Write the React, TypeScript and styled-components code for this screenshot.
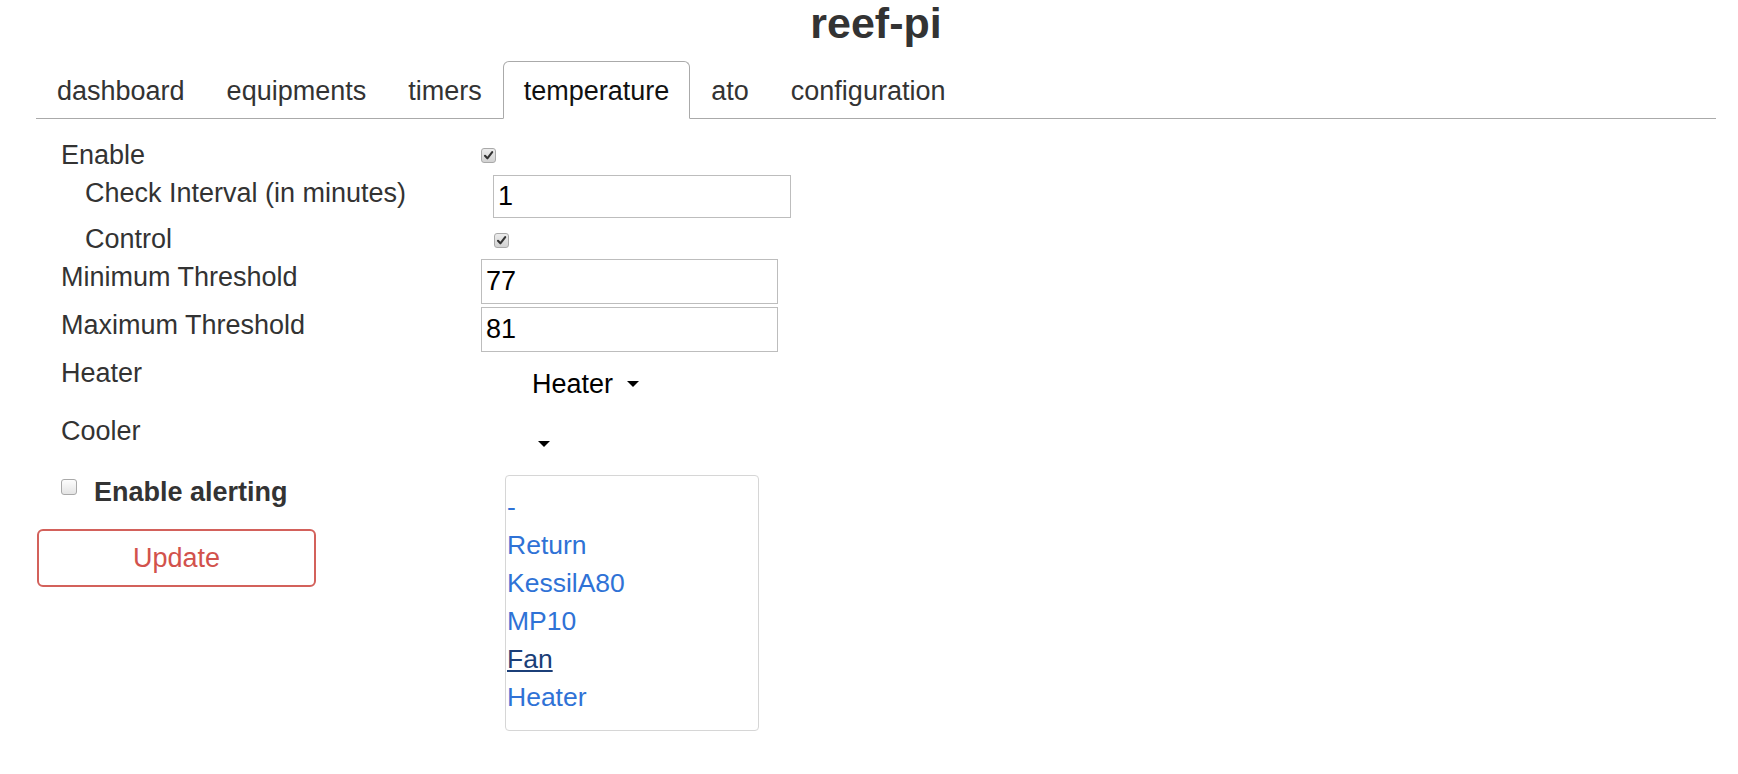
import { FC } from "react";
import styled, { createGlobalStyle } from "styled-components";

const GlobalStyle = createGlobalStyle`
  body {
    margin: 0;
    background: #fff;
    font-family: "Liberation Sans", Arial, sans-serif;
    font-size: 27px;
    color: #333;
  }
`

const Page = styled.div`
  min-height: 774px;
  padding: 0 22px 0 36px;
`

const Title = styled.h1`
  margin: 0;
  text-align: center;
  font-size: 43px;
  line-height: 47px;
  font-weight: 700;
  color: #333;
`

const Tabs = styled.ul`
  display: flex;
  list-style: none;
  margin: 14px 0 0;
  padding: 0;
  border-bottom: 1px solid #aaa;
`

const Tab = styled.li<{ $active?: boolean }>`
  padding: 10px 20px 8px;
  line-height: 38px;
  margin-bottom: -1px;
  border: 1px solid ${p => (p.$active ? '#aaa' : 'transparent')};
  border-bottom-color: ${p => (p.$active ? '#fff' : 'transparent')};
  border-radius: 6px 6px 0 0;
  background: ${p => (p.$active ? '#fff' : 'transparent')};
  color: ${p => (p.$active ? '#111' : '#333')};
  cursor: pointer;
`

const Form = styled.div`
  padding-top: 17px;
`

const Row = styled.div<{ $h: number }>`
  display: grid;
  grid-template-columns: 420px 1fr;
  align-items: start;
  height: ${p => p.$h}px;
  padding-left: 25px;
`

const Label = styled.label<{ $indent?: boolean }>`
  padding-left: ${p => (p.$indent ? 24 : 0)}px;
  line-height: 38px;
  white-space: nowrap;
`

const Control = styled.div<{ $top: number; $left?: number }>`
  margin-top: ${p => p.$top}px;
  margin-left: ${p => p.$left ?? 0}px;
`

const Box = styled.span<{ $checked?: boolean }>`
  display: inline-flex;
  align-items: center;
  justify-content: center;
  width: 15px;
  height: 15px;
  box-sizing: border-box;
  border: 1px solid #a9a9a9;
  border-radius: 3px;
  background: ${p => (p.$checked
    ? 'linear-gradient(#ececec, #d2d2d2)'
    : 'linear-gradient(#fdfdfd, #e4e4e4)')};
  vertical-align: top;
`

const CheckBox: FC<{ checked?: boolean }> = ({ checked }) => (
  <Box $checked={checked}>
    {checked ? (
      <svg width="11" height="11" viewBox="0 0 11 11">
        <path d="M2 5.8 L4.4 8.3 L9.2 2.2" fill="none" stroke="#333" strokeWidth="2.1" strokeLinecap="round" strokeLinejoin="round" />
      </svg>
    ) : null}
  </Box>
)

const TextInput = styled.input<{ $h: number; $w: number }>`
  display: block;
  box-sizing: border-box;
  width: ${p => p.$w}px;
  height: ${p => p.$h}px;
  border: 1px solid #bdbdbd;
  border-radius: 0;
  padding: 0 4px;
  font-family: "Liberation Sans", Arial, sans-serif;
  font-size: 27px;
  color: #000;
  outline: none;
`

const Dropdown = styled.div`
  position: relative;
  margin-left: 24px;
`

const Toggle = styled.button`
  display: block;
  border: none;
  background: transparent;
  padding: 0 0 0 27px;
  margin: 0;
  height: 38px;
  line-height: 38px;
  font-family: inherit;
  font-size: 27px;
  color: #000;
  text-align: left;
  white-space: pre;
`

const Caret = styled.span`
  display: inline-block;
  margin-left: 6px;
  vertical-align: 6px;
  border-top: 6px solid #000;
  border-left: 6px solid transparent;
  border-right: 6px solid transparent;
`

const Menu = styled.div`
  position: absolute;
  left: 0;
  top: calc(100% + 12px);
  width: 254px;
  box-sizing: border-box;
  padding: 12px 0 14px;
  border: 1px solid #d6d6d6;
  border-radius: 4px;
  background: #fff;
  z-index: 2;
`

const MenuItem = styled.a<{ $hover?: boolean }>`
  display: block;
  padding-left: 1px;
  line-height: 38px;
  font-size: 26.5px;
  color: ${p => (p.$hover ? '#1b3f78' : '#2f72d6')};
  text-decoration: ${p => (p.$hover ? 'underline' : 'none')};
  cursor: pointer;
`

const AlertRow = styled.label`
  display: flex;
  align-items: flex-start;
  height: 56px;
  padding-left: 25px;
  font-weight: 700;
  line-height: 38px;

  & > span:first-child {
    margin-top: 6px;
    margin-right: 17px;
    width: 16px;
    height: 16px;
  }
`

const UpdateButton = styled.button`
  display: block;
  margin-left: 1px;
  width: 279px;
  height: 58px;
  box-sizing: border-box;
  border: 2px solid #d3615b;
  border-radius: 6px;
  background: #fff;
  font-family: inherit;
  font-size: 27px;
  color: #d2524c;
`

const tabs = ['dashboard', 'equipments', 'timers', 'temperature', 'ato', 'configuration']
const equipments = ['-', 'Return', 'KessilA80', 'MP10', 'Fan', 'Heater']

const App: FC = () => {
  return (
    <Page>
      <GlobalStyle />
      <Title>reef-pi</Title>
      <Tabs>
        {tabs.map(t => (
          <Tab key={t} $active={t === 'temperature'}>{t}</Tab>
        ))}
      </Tabs>
      <Form>
        <Row $h={38}>
          <Label>Enable</Label>
          <Control $top={12}><CheckBox checked /></Control>
        </Row>
        <Row $h={46}>
          <Label $indent>Check Interval (in minutes)</Label>
          <Control $top={1} $left={12}><TextInput $h={43} $w={298} defaultValue="1" /></Control>
        </Row>
        <Row $h={38}>
          <Label $indent>Control</Label>
          <Control $top={13} $left={13}><CheckBox checked /></Control>
        </Row>
        <Row $h={48}>
          <Label>Minimum Threshold</Label>
          <Control $top={1}><TextInput $h={45} $w={297} defaultValue="77" /></Control>
        </Row>
        <Row $h={48}>
          <Label>Maximum Threshold</Label>
          <Control $top={1}><TextInput $h={45} $w={297} defaultValue="81" /></Control>
        </Row>
        <Row $h={58}>
          <Label>Heater</Label>
          <Control $top={11}>
            <Dropdown>
              <Toggle>{'Heater '}<Caret /></Toggle>
            </Dropdown>
          </Control>
        </Row>
        <Row $h={61}>
          <Label>Cooler</Label>
          <Control $top={13}>
            <Dropdown>
              <Toggle><Caret /></Toggle>
              <Menu>
                {equipments.map(e => (
                  <MenuItem key={e} $hover={e === 'Fan'}>{e}</MenuItem>
                ))}
              </Menu>
            </Dropdown>
          </Control>
        </Row>
        <AlertRow>
          <CheckBox />
          Enable alerting
        </AlertRow>
        <UpdateButton>Update</UpdateButton>
      </Form>
    </Page>
  )
}

export default App;
